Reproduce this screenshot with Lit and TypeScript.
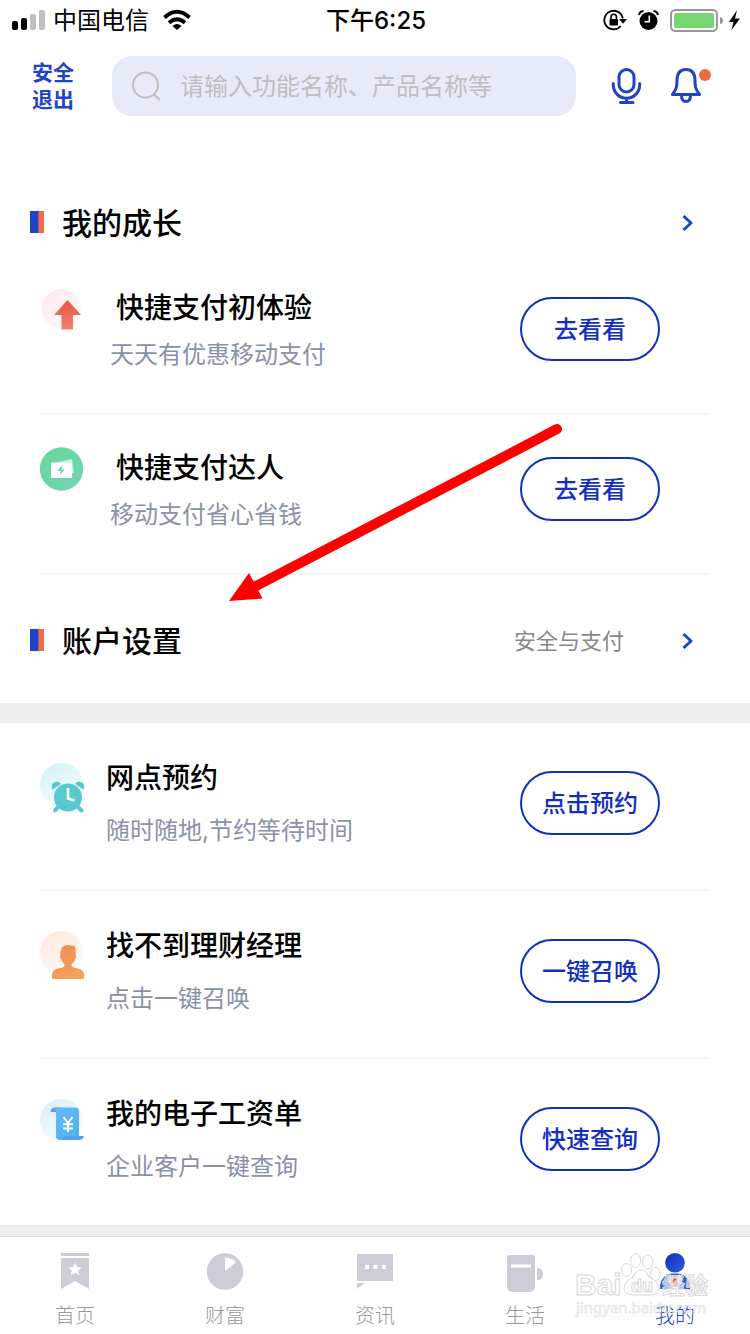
import { LitElement, html, css, svg } from "lit";
import { customElement } from "lit/decorators.js";

const upIcon = html`<svg class="icon" viewBox="0 0 48 56" aria-hidden="true">
  <defs>
    <linearGradient id="a1" x1="0" y1="0" x2="1" y2="1"><stop offset="0" stop-color="#fde7e9" /><stop offset="1" stop-color="#fffdfd" /></linearGradient>
    <linearGradient id="a2" x1="0" y1="0" x2="0" y2="1"><stop offset="0" stop-color="#ec5340" /><stop offset="1" stop-color="#f1836c" /></linearGradient>
  </defs>
  <circle cx="22" cy="19" r="20" fill="url(#a1)" />
  <path d="M27.500 10 41 25h-8v14.500H21.500V25H14z" fill="url(#a2)" />
</svg>`;

const cardIcon = html`<svg class="icon" viewBox="0 0 48 56" aria-hidden="true">
  <defs>
    <linearGradient id="b1" x1="0" y1="0" x2="1" y2="1"><stop offset="0" stop-color="#67d798" /><stop offset="1" stop-color="#72d4b4" /></linearGradient>
  </defs>
  <circle cx="21.500" cy="19" r="21.700" fill="url(#b1)" />
  <path d="M15 12.500 32 9l2 14-2.500.4V12.500z" fill="#c9f1df" />
  <rect x="11" y="12.500" width="21" height="15.500" rx="1" fill="#fff" />
  <path d="M22.500 14.500 17.500 21h3.300l-1.300 4.800 5.200-6.300h-3.200z" fill="#6bd5a5" />
</svg>`;

const clockIcon = html`<svg class="icon" viewBox="0 0 48 56" aria-hidden="true">
  <defs>
    <linearGradient id="c1" x1="0.200" y1="0" x2="0.800" y2="1"><stop offset="0" stop-color="#d3f3f5" /><stop offset="1" stop-color="#fafefe" /></linearGradient>
  </defs>
  <circle cx="21.500" cy="21.500" r="21.500" fill="url(#c1)" />
  <g fill="#59c9cf">
    <path d="M12.500 26.500a5 5 0 1 1 8.500-5.500z" />
    <path d="M43.500 26.500a5 5 0 1 0-8.500-5.500z" />
    <circle cx="28" cy="34.500" r="14" />
  </g>
  <path d="m19 43-4 4.500M37 43l4.500 4.500" stroke="#59c9cf" stroke-width="4" stroke-linecap="round" />
  <path d="M28 25v10.500l6.500 2" fill="none" stroke="#fff" stroke-width="2.600" />
</svg>`;

const personIcon = html`<svg class="icon" viewBox="0 0 48 56" aria-hidden="true">
  <defs>
    <linearGradient id="d1" x1="0.200" y1="0" x2="0.800" y2="1"><stop offset="0" stop-color="#fce9df" /><stop offset="1" stop-color="#fffaf7" /></linearGradient>
    <linearGradient id="d2" x1="0" y1="0" x2="0.500" y2="1"><stop offset="0" stop-color="#f08a55" /><stop offset="1" stop-color="#f2a35c" /></linearGradient>
  </defs>
  <circle cx="21.500" cy="21.500" r="21.500" fill="url(#d1)" />
  <path d="M12 47v-2.500c0-5 4-7 8.500-7.500 3.500-.6 4.300-2 4.100-3.800-1.800-1.500-3.100-3.200-3.600-5.400-1.300-1-1.300-3-.5-3.800C20.300 17.500 23 14 28 14c2 0 4.500 1.200 7.500.8-.8 1-.4 2 0 3.200.4 1.500.3 3.800.2 6 .8.800.8 2.800-.5 3.800-.5 2.200-1.800 3.900-3.600 5.400-.2 1.800.6 3.200 4.100 3.800 4.500.5 8.500 2.500 8.500 7.500V47q0 1-1 1H13q-1 0-1-1z" fill="url(#d2)" />
</svg>`;

const billIcon = html`<svg class="icon" viewBox="0 0 48 56" aria-hidden="true">
  <defs>
    <linearGradient id="e1" x1="0.200" y1="0" x2="0.800" y2="1"><stop offset="0" stop-color="#dbeffd" /><stop offset="1" stop-color="#f8fcff" /></linearGradient>
    <linearGradient id="e2" x1="0" y1="0" x2="1" y2="1"><stop offset="0" stop-color="#65b9fa" /><stop offset="1" stop-color="#4fb0ec" /></linearGradient>
  </defs>
  <circle cx="21.500" cy="21.500" r="21.500" fill="url(#e1)" />
  <path d="M10.500 13q0-4.500 5-4.500h6V13z" fill="#57a5ee" />
  <path d="M15 8.500h20q4 0 4 4V41H20q-4 0-4-4V13q0-3-1-4.500z" fill="url(#e2)" />
  <path d="M20 41q3.500 0 4-4h19.700q0 4-5 4z" fill="#4fa3ea" />
  <path d="m23.500 18 4.500 6 4.500-6M23 25.300h10M23 29.500h10M28 24v9" fill="none" stroke="#fff" stroke-width="2" />
</svg>`;

const chevron = html`<svg class="chevron" viewBox="0 0 12 18" aria-hidden="true">
  <path d="m1.500 2 7.500 7-7.500 7" fill="none" stroke="#1f44c6" stroke-width="3" stroke-linejoin="round" />
</svg>`;

const growth = [
  { icon: upIcon, title: "快捷支付初体验", sub: "天天有优惠移动支付", action: "去看看" },
  { icon: cardIcon, title: "快捷支付达人", sub: "移动支付省心省钱", action: "去看看" },
];

const services = [
  { icon: clockIcon, title: "网点预约", sub: "随时随地,节约等待时间", action: "点击预约" },
  { icon: personIcon, title: "找不到理财经理", sub: "点击一键召唤", action: "一键召唤" },
  { icon: billIcon, title: "我的电子工资单", sub: "企业客户一键查询", action: "快速查询" },
];

const tabs = [
  {
    label: "首页",
    active: false,
    icon: svg`<path d="M6 1h28v3H6zM6 6h28v31l-14-8-14 8z" fill="#cdcdd7"/><path d="m20 10.500 2 4.500 4.800.4-3.600 3.200 1.100 4.700-4.300-2.500-4.300 2.500 1.100-4.700-3.600-3.200 4.800-.4z" fill="#fff"/>`,
  },
  {
    label: "财富",
    active: false,
    icon: svg`<circle cx="20" cy="19.500" r="18.300" fill="#cdcdd7"/><path d="M20 5.500q6.500 0 11 5L20 19z" fill="#fff"/>`,
  },
  {
    label: "资讯",
    active: false,
    icon: svg`<path d="M2 2h36v27H2zM2 31h8l-8 6z" fill="#cdcdd7"/><path d="M10 13h4v4h-4zM18.500 13h4v4h-4zM27 13h4v4h-4z" fill="#fff"/>`,
  },
  {
    label: "生活",
    active: false,
    icon: svg`<path d="M2 4.500Q2 3 3.500 3h25Q30 3 30 4.500V34q0 6-6 6H8q-6 0-6-6zM32 16q6 0 6 6.200T32 28z" fill="#cdcdd7"/><path d="M6 12.500h20v3H6z" fill="#fff"/>`,
  },
  {
    label: "我的",
    active: true,
    icon: svg`<defs><linearGradient id="t1" x1="0" y1="0" x2="1" y2="1"><stop offset="0" stop-color="#0f30bd"/><stop offset="1" stop-color="#315ae0"/></linearGradient></defs><circle cx="20" cy="10.800" r="9.800" fill="url(#t1)"/><path d="M5 37q-.5-13 11.500-15.500h7Q35.500 24 35 37z" fill="#2a62dc"/><path d="m15 22 5 4 5-4 3 6-5 9h-6l-5-9z" fill="#dbe6fa"/><path d="M17.500 23h5l-1 4 1.500 4-3 3-3-3 1.500-4z" fill="#ee5b35"/>`,
  },
];

@customElement("app-root")
export class AppRoot extends LitElement {
  static styles = css`
    :host {
      display: block;
      font-family: Inter, "Noto Sans CJK SC", sans-serif;
      color: #000;
    }
    .page {
      position: relative;
      display: flex;
      flex-direction: column;
      min-height: 100vh;
      background: #fff;
    }
    svg {
      display: block;
      flex: none;
      overflow: visible;
    }
    .status {
      display: grid;
      grid-template-columns: 1fr auto 1fr;
      align-items: center;
      height: 40px;
      padding: 0 10px 0 12px;
      font-size: 24px;
      line-height: 32px;
    }
    .status span {
      padding-top: 2px;
    }
    .carrier,
    .system {
      display: flex;
      align-items: center;
    }
    .carrier {
      gap: 8px;
    }
    .system {
      justify-content: flex-end;
      gap: 10px;
    }
    .signal {
      width: 33px;
      height: 20px;
    }
    .wifi {
      width: 28px;
      height: 20px;
      margin-left: 6px;
    }
    .time {
      font-weight: 500;
    }
    .lock,
    .alarm {
      width: 24px;
      height: 24px;
    }
    .battery {
      width: 70px;
      height: 24px;
    }
    .top {
      display: flex;
      align-items: center;
      padding: 16px 38px 16px 32px;
    }
    button {
      padding: 0;
      border: 0;
      background: none;
      font-family: inherit;
      cursor: pointer;
    }
    .exit {
      width: 42px;
      margin-right: 38px;
      color: #1f44c6;
      font-size: 21px;
      font-weight: 700;
      line-height: 27px;
    }
    .search {
      display: flex;
      flex: 1;
      align-items: center;
      gap: 18px;
      height: 60px;
      min-width: 0;
      padding: 0 20px;
      border-radius: 20px;
      background: #e7ebf8;
      box-sizing: border-box;
    }
    .search svg {
      width: 30px;
      height: 32px;
    }
    .search input {
      flex: 1;
      min-width: 0;
      padding: 2px 0 0;
      border: 0;
      outline: 0;
      background: none;
      color: #333;
      font-family: inherit;
      font-size: 24px;
      line-height: 36px;
    }
    .search input::placeholder {
      color: #bfbfc1;
      opacity: 1;
    }
    .tools {
      display: flex;
      gap: 28px;
      margin-left: 34px;
    }
    .mic {
      width: 32px;
      height: 40px;
    }
    .bell {
      width: 42px;
      height: 40px;
    }
    .main {
      flex: 1;
      background: #eee;
    }
    .block {
      background: #fff;
    }
    .growth {
      padding: 59px 0 30px;
    }
    .services {
      margin-top: 20px;
    }
    .heading {
      display: flex;
      align-items: center;
      height: 64px;
      padding: 0 56px 0 30px;
      color: inherit;
      text-decoration: none;
    }
    .settings {
      margin-top: 34px;
    }
    .heading h2 {
      flex: 1;
      margin: 0;
      padding-left: 18px;
      font-size: 30px;
      font-weight: 500;
      line-height: 40px;
    }
    .mark {
      width: 14px;
      height: 22px;
      margin-bottom: 2px;
      background: linear-gradient(90deg, #2143c8 8px, #a65a75 8px 9px, #f06a50 9px);
    }
    .note {
      padding-right: 58px;
      color: #888;
      font-size: 22px;
      line-height: 32px;
    }
    .chevron {
      width: 12px;
      height: 18px;
    }
    .list {
      margin: 0;
      padding: 0;
      list-style: none;
    }
    .row {
      display: flex;
      align-items: flex-start;
      height: 166px;
      margin: 0 40px;
      padding-right: 50px;
      border-bottom: 2px solid #f6f6f6;
    }
    .services .row:last-child {
      border-bottom: 0;
    }
    .growth .row {
      height: 158px;
    }
    .icon {
      width: 48px;
      height: 56px;
      margin-top: 40px;
    }
    .growth .icon {
      margin-top: 35px;
    }
    .copy {
      display: grid;
      flex: 1;
      gap: 17px;
      padding: 35px 0 0 18px;
    }
    .growth .copy {
      gap: 11px;
      padding: 33px 0 0 22px;
    }
    .growth h3 {
      padding-left: 6px;
    }
    .copy h3,
    .copy p {
      margin: 0;
    }
    .copy h3 {
      font-size: 28px;
      font-weight: 500;
      line-height: 40px;
    }
    .copy p {
      color: #8a92ab;
      font-size: 24px;
      line-height: 32px;
    }
    .action {
      width: 140px;
      height: 64px;
      margin-top: 48px;
      padding-top: 2px;
      border: 2px solid #142fbe;
      border-radius: 32px;
      color: #142fbe;
      font-size: 24px;
      font-weight: 500;
      line-height: 32px;
    }
    .growth .action {
      margin-top: 42px;
    }
    .tabs {
      position: sticky;
      bottom: 0;
      display: grid;
      grid-template-columns: repeat(5, 1fr);
      margin-top: 11px;
      border-top: 1px solid #dcdcdc;
      background: #fff;
    }
    .tab {
      display: flex;
      flex-direction: column;
      align-items: center;
      gap: 8px;
      height: 82px;
      padding-top: 15px;
      color: #999;
      font-size: 20px;
      font-weight: 300;
      line-height: 32px;
      text-decoration: none;
    }
    .tab svg {
      width: 40px;
      height: 40px;
    }
    .tab.active {
      color: #1f44c6;
    }
    .foot {
      background: #eee;
    }
    .pointer {
      position: absolute;
      top: 420px;
      left: 226px;
      width: 340px;
      height: 184px;
      pointer-events: none;
    }
    .watermark {
      position: absolute;
      right: 36px;
      bottom: 12px;
      width: 140px;
      height: 72px;
      pointer-events: none;
    }
    .watermark text {
      font-family: "Liberation Sans", "Noto Sans CJK SC", sans-serif;
      font-weight: 700;
    }
    .watermark .site {
      font-family: "Noto Sans", sans-serif;
      font-weight: 400;
    }
  `;

  private row(item: (typeof growth)[number]) {
    return html`<li class="row">
      ${item.icon}
      <div class="copy">
        <h3>${item.title}</h3>
        <p>${item.sub}</p>
      </div>
      <button class="action" type="button">${item.action}</button>
    </li>`;
  }

  render() {
    return html`<div class="page">
      <div class="status">
        <div class="carrier">
          <svg class="signal" viewBox="0 0 33 20" aria-hidden="true">
            <rect y="11" width="6" height="9" rx="2" />
            <rect x="9" y="8" width="6" height="12" rx="2" />
            <rect x="18" y="4" width="6" height="16" rx="2" fill="#bfbfbf" />
            <rect x="27" width="6" height="20" rx="2" fill="#bfbfbf" />
          </svg>
          <span>中国电信</span>
          <svg class="wifi" viewBox="0 0 28 20" aria-hidden="true">
            <path d="M1.500 7.500q12.500-11.500 25 0M6 12.800q8-7 16 0" fill="none" stroke="#000" stroke-width="3.800" />
            <path d="M9.500 16q4.500-4 9 0L14 20z" />
          </svg>
        </div>
        <span class="time">下午6:25</span>
        <div class="system">
          <svg class="lock" viewBox="0 0 24 24" aria-hidden="true">
            <path d="M18.800 18A9.300 9.300 0 1 1 20.800 10.500" fill="none" stroke="#000" stroke-width="1.800" />
            <path d="M17 11h8l-4 4.800z" />
            <rect x="7.500" y="11" width="8.500" height="6.500" rx="1" />
            <path d="M9 11.500V9a2.700 2.700 0 0 1 5.400 0v2.500" fill="none" stroke="#000" stroke-width="1.600" />
          </svg>
          <svg class="alarm" viewBox="0 0 24 24" aria-hidden="true">
            <circle cx="12.500" cy="13" r="9" />
            <path d="M3 7Q3.500 3.500 7.500 3M22 7q-.5-3.500-4.500-4" fill="none" stroke="#000" stroke-width="2" />
            <path d="M13.300 7.500v6.200H8.500" fill="none" stroke="#fff" stroke-width="1.600" />
          </svg>
          <svg class="battery" viewBox="0 0 70 24" aria-hidden="true">
            <rect x="1" y="2" width="46" height="21" rx="4.500" fill="none" stroke="#999" stroke-width="2" />
            <rect x="4" y="5" width="40" height="15" rx="2" fill="#76d672" />
            <path d="M50 9q3 .5 3 3.500T50 16z" fill="#999" />
            <path d="m67 2-8 12h4.500L61.500 22l8.500-11.500H65z" />
          </svg>
        </div>
      </div>

      <header class="top">
        <button class="exit" type="button">安全<br />退出</button>
        <label class="search">
          <svg viewBox="0 0 30 32" aria-hidden="true">
            <circle cx="13.500" cy="15" r="12.500" fill="none" stroke="#bfbfbf" stroke-width="2" />
            <path d="m22 24.500 6 5.500" stroke="#bfbfbf" stroke-width="2.200" />
          </svg>
          <input type="search" aria-label="搜索" placeholder="请输入功能名称、产品名称等" />
        </label>
        <div class="tools">
          <button type="button" aria-label="语音">
            <svg class="mic" viewBox="0 0 32 40" aria-hidden="true">
              <g fill="none" stroke="#1f44c6" stroke-width="3" stroke-linecap="round">
                <rect x="9" y="3.500" width="15" height="22.500" rx="7.500" />
                <path d="M3.300 17.500v1.500a13.200 13.200 0 0 0 26.400 0v-1.500M16.500 32v4.500M10.500 36.500h12.500" />
              </g>
            </svg>
          </button>
          <button type="button" aria-label="消息">
            <svg class="bell" viewBox="0 0 42 40" aria-hidden="true">
              <g fill="none" stroke="#1f44c6" stroke-width="3" stroke-linejoin="round">
                <path d="M7 13.500Q7.500 3.500 16 3.500t9 10c0 8 .5 9.500 4.500 15H2.500C6.500 23 7 21.500 7 13.500z" />
                <path d="M11.500 29q0 6.500 4.500 6.500t4.500-6.500" />
              </g>
              <circle cx="35" cy="9" r="6" fill="#ee6c45" />
            </svg>
          </button>
        </div>
      </header>

      <main class="main">
        <section class="block growth">
          <a class="heading" href="#growth"><span class="mark"></span><h2>我的成长</h2>${chevron}</a>
          <ul class="list">${growth.map((item) => this.row(item))}</ul>
          <a class="heading settings" href="#settings"
            ><span class="mark"></span><h2>账户设置</h2><span class="note">安全与支付</span>${chevron}</a
          >
        </section>
        <section class="block services">
          <ul class="list">${services.map((item) => this.row(item))}</ul>
        </section>
      </main>

      <div class="foot">
        <nav class="tabs">
          ${tabs.map(
            (tab) => html`<a class="tab ${tab.active ? "active" : ""}" href="#${tab.label}">
              <svg viewBox="0 0 40 40" aria-hidden="true">${tab.icon}</svg>
              <span>${tab.label}</span>
            </a>`,
          )}
        </nav>
      </div>

      <svg class="pointer" viewBox="0 0 340 184" aria-hidden="true">
        <path d="M331 9 30 166" stroke="#f00" stroke-width="10" stroke-linecap="round" />
        <path d="m3 181 20-28 13.500 25.500z" fill="#f00" />
      </svg>

      <svg class="watermark" viewBox="0 0 140 72" aria-hidden="true">
        <g fill="#fff" fill-opacity="0.600" stroke="#d8d8d8" stroke-width="1">
          <ellipse cx="52.500" cy="20" rx="5" ry="6.500" />
          <ellipse cx="61.700" cy="10.500" rx="5" ry="7" />
          <ellipse cx="73.700" cy="12" rx="5" ry="7" />
          <ellipse cx="81.500" cy="24" rx="5" ry="6.500" />
          <path d="M67 20q5 0 8 7 10 5 10 11t-8 7H58q-8-1-8-7t9-11q3-7 8-7z" />
          <text x="1" y="45" font-size="30">Bai</text>
          <text x="57" y="42" font-size="18">du</text>
          <text x="88" y="44" font-size="23">经验</text>
        </g>
        <text class="site" x="2" y="63" font-size="15" fill="#fff" fill-opacity="0.500" stroke="#dcdcdc" stroke-width="0.600">jingyan.baidu.com</text>
      </svg>
    </div>`;
  }
}
